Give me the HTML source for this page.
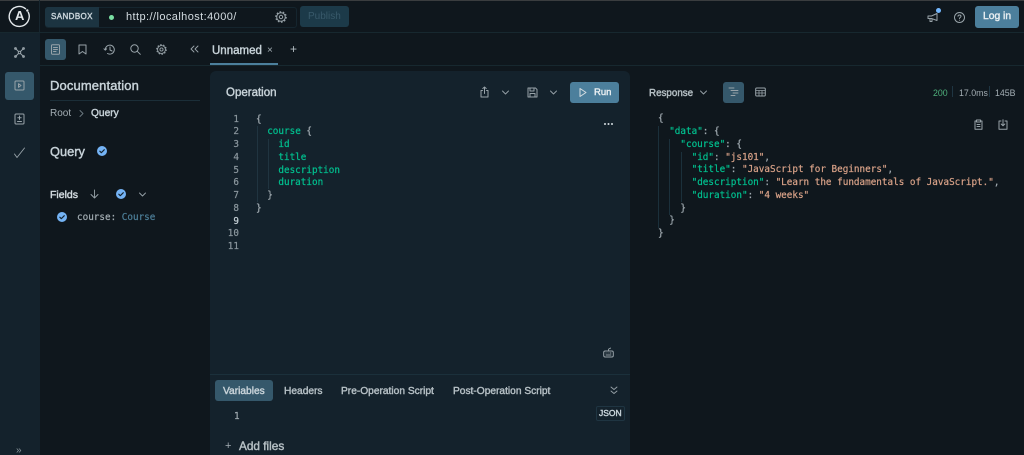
<!DOCTYPE html>
<html><head><meta charset="utf-8">
<style>
html,body{margin:0;padding:0;width:1024px;height:455px;overflow:hidden;background:#0f171d;}
body{position:relative;font-family:"Liberation Sans",sans-serif;color:#d5dde2;}
#w{left:0;top:0;width:1024px;height:455px;overflow:hidden;filter:blur(.25px);}
div,span,svg{position:absolute;}
.t{white-space:nowrap;line-height:14px;}
.b{-webkit-text-stroke:.42px currentColor;}
.m{font-family:"DejaVu Sans Mono","Liberation Mono",monospace;font-size:9.3px;white-space:pre;line-height:12.75px;-webkit-text-stroke:.2px currentColor;}
.m span{position:static;}
.g{color:#00c08f;} .n{color:#8b979e;} .s{color:#d9a288;} .p{color:#a3adb3;}
svg{fill:none;stroke:#98a3a9;stroke-width:1;stroke-linecap:round;stroke-linejoin:round;}
</style></head><body><div id="w">
<div style="left:0;top:0;width:1024px;height:1px;background:#3a3d3f"></div>
<!-- rail -->
<div style="left:0;top:33px;width:40px;height:422px;background:#14222c"></div>
<div style="left:39px;top:0;width:1px;height:33px;background:#17262f"></div>
<div style="left:0;top:32px;width:1024px;height:1px;background:#17282f"></div>
<div style="left:40px;top:65px;width:984px;height:1px;background:#17282f"></div>
<!-- logo -->
<svg style="left:8px;top:5px;width:23px;height:23px;stroke:#e3e8eb;stroke-width:1.400" viewBox="0 0 23 23"><path d="M17.500 3.700A10 10 0 1 0 20.300 7.300"/><circle cx="19.300" cy="5.500" r=".5" fill="#e3e8eb"/></svg>
<div class="t" style="left:15px;top:9px;font-size:13px;font-weight:bold;color:#e3e8eb">A</div>
<!-- sandbox -->
<div style="left:45px;top:7px;width:250px;height:19px;border:1px solid #15252e;border-radius:3px"></div>
<div style="left:45px;top:7px;width:54px;height:20px;background:#1c3441;border-radius:3px 0 0 3px"></div>
<div class="t b" style="left:51px;top:10px;font-size:8px;letter-spacing:.4px;color:#c8d3d9">SANDBOX</div>
<div style="left:109px;top:15px;width:5px;height:5px;border-radius:50%;background:#7ae0a3"></div>
<div class="t" style="left:126px;top:10px;font-size:11px;letter-spacing:.42px;color:#d5dde2">http://localhost:4000/</div>
<svg style="left:275px;top:11px;width:12px;height:12px" viewBox="0 0 12 12"><circle cx="6" cy="6" r="4.300"/><circle cx="6" cy="6" r="5.200" stroke-width="1.200" stroke-dasharray="1.600 1.670" stroke-linecap="butt"/><circle cx="6" cy="6" r="1.700"/></svg>
<div style="left:300px;top:6px;width:49px;height:21px;background:#1c3a49;border-radius:3px"></div>
<div class="t" style="left:308px;top:10px;font-size:10px;color:#38596a">Publish</div>
<!-- top right -->
<svg style="left:927px;top:12px;width:12px;height:11px" viewBox="0 0 12 11"><path d="M1 4h3.500L10 1.500v7L4.500 6.500H1zM3 6.500v3h2V7"/></svg>
<div style="left:936px;top:8px;width:5px;height:5px;border-radius:50%;background:#74b8ff"></div>
<svg style="left:954px;top:12px;width:11px;height:11px" viewBox="0 0 11 11"><circle cx="5.500" cy="5.500" r="5"/><path d="M4 4.300C4 2.600 7 2.600 7 4.300 7 5.400 5.500 5.400 5.500 6.600M5.500 8.200v.1"/></svg>
<div style="left:975px;top:6px;width:44px;height:22px;background:#4c7f9c;border-radius:3px"></div>
<div class="t b" style="left:983px;top:10px;font-size:10.300px;color:#e8eef1">Log in</div>
<!-- rail icons -->
<svg style="left:13px;top:46px;width:13px;height:13px" viewBox="0 0 13 13"><path d="M2.500 2.500l3 3M10.500 2.500l-3 3M2.500 10.500l3-3M10.500 10.500l-3-3"/><circle cx="2.500" cy="2.500" r=".9"/><circle cx="10.500" cy="2.500" r=".9"/><circle cx="2.500" cy="10.500" r=".9"/><circle cx="10.500" cy="10.500" r=".9"/><circle cx="6.500" cy="6.500" r="1.200"/></svg>
<div style="left:5px;top:72px;width:29px;height:28px;background:#35586b;border-radius:3px"></div>
<svg style="left:14px;top:80px;width:11px;height:11px" viewBox="0 0 11 11"><rect x="1" y="1" width="9" height="9" rx="1"/><path d="M4.500 3.700L7 5.500 4.500 7.300z"/></svg>
<svg style="left:14px;top:113px;width:11px;height:12px" viewBox="0 0 11 12"><rect x="1" y="1" width="9" height="10" rx="1"/><path d="M5.500 3v3.500M3.800 4.800h3.400M3.500 8.500h4"/></svg>
<svg style="left:13px;top:146px;width:13px;height:13px" viewBox="0 0 13 13"><path d="M1.500 8l2.500 3.500L11.500 2" stroke-width=".9"/></svg>
<div class="t" style="left:16px;top:444px;font-size:10px;color:#8b979e">»</div>
<!-- toolbar -->
<div style="left:45px;top:39px;width:21px;height:21px;background:#35586b;border-radius:3px"></div>
<svg style="left:50px;top:44px;width:11px;height:11px" viewBox="0 0 11 11"><rect x="1.500" y=".8" width="8" height="9.400" rx="1"/><path d="M3.500 3.500h4M3.500 5.500h4M3.500 7.500h2.500"/></svg>
<svg style="left:78px;top:44px;width:9px;height:11px" viewBox="0 0 9 11"><path d="M1 1h7v9L4.500 7.500 1 10z"/></svg>
<svg style="left:103px;top:44px;width:12px;height:11px" viewBox="0 0 12 11"><path d="M1 4.800l1.300 1.300 1.300-1.300M2.300 6A4.500 4.500 0 1 1 4.500 9.500M7 3v3l2 1"/></svg>
<svg style="left:130px;top:44px;width:11px;height:11px" viewBox="0 0 11 11"><circle cx="4.500" cy="4.500" r="3.700"/><path d="M7.300 7.300L10.300 10.300"/></svg>
<svg style="left:156px;top:44px;width:11px;height:11px" viewBox="0 0 12 12"><circle cx="6" cy="6" r="4.300"/><circle cx="6" cy="6" r="5.200" stroke-width="1.200" stroke-dasharray="1.600 1.670" stroke-linecap="butt"/><circle cx="6" cy="6" r="1.700"/></svg>
<svg style="left:190px;top:45px;width:9px;height:8px" viewBox="0 0 9 8"><path d="M4 1L1 4l3 3M8 1L5 4l3 3" stroke-width=".9"/></svg>
<div class="t b" style="left:212px;top:44px;font-size:11.500px;color:#c8d3d9">Unnamed</div>
<div class="t" style="left:267px;top:44px;font-size:10px;color:#a3adb3">×</div>
<div class="t" style="left:290px;top:42px;font-size:12px;color:#b5bfc4">+</div>
<div style="left:210px;top:63px;width:68px;height:2px;background:#4c7f9c"></div>
<!-- docs -->
<div class="t b" style="left:50px;top:79px;font-size:13px;letter-spacing:.12px;color:#c8d3d9">Documentation</div>
<div style="left:50px;top:100px;width:150px;height:1px;background:#1b2e38"></div>
<div class="t" style="left:50px;top:107px;font-size:10px;color:#a3adb3">Root</div>
<svg style="left:79px;top:110px;width:5px;height:7px" viewBox="0 0 5 7"><path d="M1 .5l3 3-3 3" stroke-width=".9" stroke="#6d7a81"/></svg>
<div class="t b" style="left:91px;top:107px;font-size:10.200px;color:#c8d3d9">Query</div>
<div class="t b" style="left:50px;top:145px;font-size:12.800px;color:#c8d3d9">Query</div>
<svg style="left:97px;top:146px;width:10px;height:10px;stroke:#14222c;stroke-width:1.100" viewBox="0 0 10 10"><circle cx="5" cy="5" r="5" fill="#74b3f5" stroke="none"/><path d="M2.800 5.200l1.500 1.500 3-3"/></svg>
<div class="t b" style="left:50px;top:188px;font-size:10.500px;color:#d5dde2">Fields</div>
<svg style="left:90px;top:189px;width:9px;height:10px" viewBox="0 0 9 10"><path d="M4.500 1v8M1 5.500L4.500 9 8 5.500" stroke-width=".9"/></svg>
<svg style="left:116px;top:189px;width:10px;height:10px;stroke:#14222c;stroke-width:1.100" viewBox="0 0 10 10"><circle cx="5" cy="5" r="5" fill="#74b3f5" stroke="none"/><path d="M2.800 5.200l1.500 1.500 3-3"/></svg>
<svg style="left:139px;top:192px;width:7px;height:5px" viewBox="0 0 7 5"><path d="M.5 1L3.500 4l3-3" stroke-width=".9"/></svg>
<svg style="left:57px;top:212px;width:10px;height:10px;stroke:#14222c;stroke-width:1.100" viewBox="0 0 10 10"><circle cx="5" cy="5" r="5" fill="#74b3f5" stroke="none"/><path d="M2.800 5.200l1.500 1.500 3-3"/></svg>
<div class="m" style="left:77px;top:212px;color:#a3adb3">course: <span style="color:#4d7f99">Course</span></div>
<!-- operation panel -->
<div style="left:210px;top:71px;width:420px;height:384px;background:#14222c;border-radius:6px 6px 0 0"></div>
<div class="t b" style="left:226px;top:86px;font-size:11.500px;color:#c8d3d9">Operation</div>
<svg style="left:480px;top:86px;width:9px;height:12px" viewBox="0 0 9 12"><path d="M2.500 4.500H1V11h7V4.500H6.500M4.500 7.500V1M2.800 2.500L4.500 1l1.700 1.500"/></svg>
<svg style="left:502px;top:90px;width:7px;height:5px" viewBox="0 0 7 5"><path d="M.5 1L3.500 4l3-3" stroke-width=".9"/></svg>
<svg style="left:527px;top:87px;width:11px;height:11px" viewBox="0 0 11 11"><path d="M1 1h7.500L10 2.500V10H1zM3 1v3h4V1M3 10V6.500h5V10"/></svg>
<svg style="left:550px;top:90px;width:7px;height:5px" viewBox="0 0 7 5"><path d="M.5 1L3.500 4l3-3" stroke-width=".9"/></svg>
<div style="left:570px;top:82px;width:49px;height:21px;background:#4c7f9c;border-radius:3px"></div>
<svg style="left:579px;top:87px;width:8px;height:11px;stroke:#d5dde2" viewBox="0 0 8 11"><path d="M1 1.500v8l6-4z"/></svg>
<div class="t b" style="left:594px;top:86px;font-size:9.500px;color:#e8eef1">Run</div>
<div style="left:604px;top:123px;width:2px;height:2px;border-radius:50%;background:#d5dde2;box-shadow:3.500px 0 #d5dde2,7px 0 #d5dde2"></div>
<!-- line numbers -->
<div class="m n" style="left:219px;top:113.500px;width:20px;text-align:right">1
2
3
4
5
6
7
8
<span style="color:#c8d3d9">9</span>
10
11</div>
<div style="left:257px;top:126px;width:1px;height:76px;background:#203440"></div>
<div style="left:268px;top:139px;width:1px;height:50px;background:#203440"></div>
<div class="m" style="left:256px;top:113.500px"><span class="p">{</span>
  <span class="g">course</span> <span class="p">{</span>
    <span class="g">id</span>
    <span class="g">title</span>
    <span class="g">description</span>
    <span class="g">duration</span>
  <span class="p">}</span>
<span class="p">}</span></div>
<svg style="left:603px;top:347px;width:11px;height:11px" viewBox="0 0 11 11"><rect x=".7" y="4" width="9.600" height="6" rx="1.500"/><path d="M5.500 4V2.500C5.500 1.500 7 2 7.500 1M3 6h.1M5 6h.1M7 6h1M3 8h5" stroke-width=".9"/></svg>
<!-- bottom tabs -->
<div style="left:210px;top:374px;width:420px;height:1px;background:#1b303b"></div>
<div style="left:215px;top:380px;width:58px;height:21px;background:#35586b;border-radius:3px"></div>
<div class="t b" style="left:223px;top:385px;font-size:10.200px;color:#c8d3d9">Variables</div>
<div class="t b" style="left:284px;top:385px;font-size:10.200px;color:#b5bfc4">Headers</div>
<div class="t b" style="left:341px;top:385px;font-size:10.200px;color:#b5bfc4">Pre-Operation Script</div>
<div class="t b" style="left:453px;top:385px;font-size:10.200px;color:#b5bfc4">Post-Operation Script</div>
<svg style="left:610px;top:386px;width:8px;height:9px" viewBox="0 0 8 9"><path d="M1 1l3 2.500L7 1M1 5l3 2.500L7 5" stroke-width=".9"/></svg>
<div style="left:596px;top:406px;width:27px;height:13px;border:1px solid #1f3542;border-radius:2px"></div>
<div class="t b" style="left:599px;top:406px;font-size:8.500px;color:#c8d3d9">JSON</div>
<div class="m" style="left:234px;top:411px;color:#a3adb3">1</div>
<div class="t" style="left:225px;top:439px;font-size:11px;color:#a3adb3">+</div>
<div class="t b" style="left:239px;top:439px;font-size:11.800px;color:#b5bfc4">Add files</div>
<!-- response -->
<div class="t b" style="left:649px;top:87px;font-size:9.800px;color:#b5bfc4">Response</div>
<svg style="left:700px;top:90px;width:7px;height:5px" viewBox="0 0 7 5"><path d="M.5 1L3.500 4l3-3" stroke-width=".9"/></svg>
<div style="left:723px;top:82px;width:21px;height:21px;background:#35586b;border-radius:3px"></div>
<svg style="left:728px;top:87px;width:12px;height:11px" viewBox="0 0 12 11"><path d="M1 1h5M3 3.500h7M5 6h5M3 8.500h4" stroke-width=".9"/></svg>
<svg style="left:755px;top:87px;width:11px;height:10px" viewBox="0 0 11 10"><rect x=".7" y="1" width="9.600" height="8" rx="1"/><path d="M.7 3.500h9.600M.7 6h9.600M4 3.500V9M7 3.500V9" stroke-width=".8"/></svg>
<div class="t" style="left:933px;top:86px;font-size:8.800px;color:#4fb07c">200</div>
<div style="left:952px;top:86px;width:1px;height:11px;background:#1f3542"></div>
<div class="t" style="left:959px;top:86px;font-size:8.800px;color:#a3adb3">17.0ms</div>
<div style="left:989px;top:86px;width:1px;height:11px;background:#1f3542"></div>
<div class="t" style="left:995px;top:86px;font-size:8.800px;color:#a3adb3">145B</div>
<svg style="left:974px;top:119px;width:9px;height:11px" viewBox="0 0 9 11"><path d="M2.500 2H1v8.300h7V2H6.500M2.500 1h4v2h-4zM3 5.500h3M3 7.500h3"/></svg>
<svg style="left:998px;top:119px;width:10px;height:11px" viewBox="0 0 10 11"><path d="M3 2H1v8.300h8V2H7M5 .7v6M3.200 5L5 6.800 6.800 5"/></svg>
<div style="left:658px;top:126px;width:1px;height:102px;background:#1b303b"></div>
<div style="left:669px;top:139px;width:1px;height:76px;background:#1b303b"></div>
<div style="left:681px;top:152px;width:1px;height:50px;background:#1b303b"></div>
<div class="m" style="left:658px;top:113.300px"><span class="p">{</span>
  <span class="g">"data"</span><span class="p">: {</span>
    <span class="g">"course"</span><span class="p">: {</span>
      <span class="g">"id"</span><span class="p">: </span><span class="s">"js101"</span><span class="p">,</span>
      <span class="g">"title"</span><span class="p">: </span><span class="s">"JavaScript for Beginners"</span><span class="p">,</span>
      <span class="g">"description"</span><span class="p">: </span><span class="s">"Learn the fundamentals of JavaScript."</span><span class="p">,</span>
      <span class="g">"duration"</span><span class="p">: </span><span class="s">"4 weeks"</span>
    <span class="p">}</span>
  <span class="p">}</span>
<span class="p">}</span></div>
</div></body></html>
